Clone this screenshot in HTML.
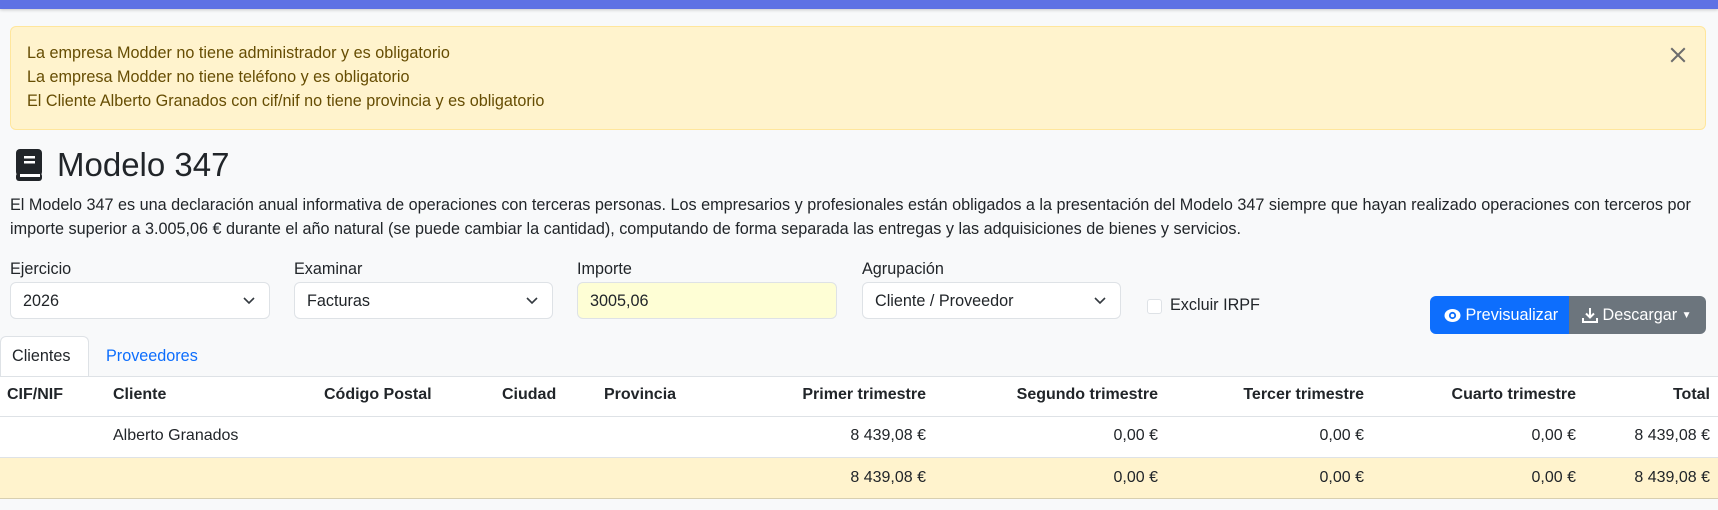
<!DOCTYPE html>
<html><head><meta charset="utf-8"><style>
*{box-sizing:border-box;margin:0;padding:0}
body{width:1718px;height:510px;background:#f8f9fa;font-family:"Liberation Sans",sans-serif;color:#212529;position:relative;overflow:hidden;font-size:16px}
.a{position:absolute;white-space:nowrap}
.topbar{position:absolute;left:0;top:0;width:1718px;height:9px;background:#5e72e4;box-shadow:0 1px 3px rgba(0,0,0,.2)}
.alert{position:absolute;left:10px;top:26px;width:1696px;height:104px;background:#fff3cd;border:1px solid #ffe69c;border-radius:6px;color:#664d03;font-size:16.2px}
.alert div{position:absolute;left:16px}
.lbl{font-size:16.2px;color:#212529}
.sel{position:absolute;top:282px;height:37px;background:#fff;border:1px solid #dee2e6;border-radius:6px;font-size:16.2px;padding:8px 12px;line-height:20px}
.sel svg{position:absolute;right:14px;top:14px}
.btn{position:absolute;top:296px;height:38px;color:#fff;font-size:16.2px;line-height:38px}
.th{font-weight:bold;font-size:16px;top:386px}
</style></head><body>
<div class="topbar"></div>
<div class="alert">
<div style="top:17px">La empresa Modder no tiene administrador y es obligatorio</div>
<div style="top:41px">La empresa Modder no tiene teléfono y es obligatorio</div>
<div style="top:65px">El Cliente Alberto Granados con cif/nif no tiene provincia y es obligatorio</div>
<svg style="position:absolute;right:18px;top:19px" width="18" height="18" viewBox="0 0 16 16"><path d="M2 2L14 14M14 2L2 14" stroke="#6c6c6c" stroke-width="1.8"/></svg>
</div>
<svg class="a" style="left:15px;top:149px" width="28" height="32" viewBox="0 0 28 32"><rect x="1" y="0" width="26" height="27" rx="4" fill="#212529"/><rect x="1" y="24" width="26" height="8" rx="3" fill="#212529"/><rect x="5" y="25" width="20" height="3" fill="#fff"/><rect x="9" y="7" width="11" height="2.5" fill="#fff"/><rect x="9" y="12" width="11" height="2.5" fill="#fff"/></svg>
<div class="a" style="left:57px;top:145px;font-size:33px;line-height:40px">Modelo 347</div>
<div class="a" style="left:10px;top:193px;font-size:16.2px;line-height:24px">El Modelo 347 es una declaración anual informativa de operaciones con terceras personas. Los empresarios y profesionales están obligados a la presentación del Modelo 347 siempre que hayan realizado operaciones con terceros por<br>importe superior a 3.005,06 € durante el año natural (se puede cambiar la cantidad), computando de forma separada las entregas y las adquisiciones de bienes y servicios.</div>
<div class="a lbl" style="left:10px;top:260px">Ejercicio</div>
<div class="a lbl" style="left:294px;top:260px">Examinar</div>
<div class="a lbl" style="left:577px;top:260px">Importe</div>
<div class="a lbl" style="left:862px;top:260px">Agrupación</div>
<div class="sel" style="left:10px;width:260px">2026<svg width="12" height="8" viewBox="0 0 12 8"><path d="M1 1l5 5 5-5" fill="none" stroke="#343a40" stroke-width="1.6"/></svg></div>
<div class="sel" style="left:294px;width:259px">Facturas<svg width="12" height="8" viewBox="0 0 12 8"><path d="M1 1l5 5 5-5" fill="none" stroke="#343a40" stroke-width="1.6"/></svg></div>
<div class="sel" style="left:577px;width:260px;background:#fefed5">3005,06</div>
<div class="sel" style="left:862px;width:259px">Cliente / Proveedor<svg width="12" height="8" viewBox="0 0 12 8"><path d="M1 1l5 5 5-5" fill="none" stroke="#343a40" stroke-width="1.6"/></svg></div>
<div class="a" style="left:1147px;top:299px;width:15px;height:15px;border:1px solid #dee2e6;border-radius:3px;background:#fff"></div>
<div class="a" style="left:1170px;top:296px;font-size:16.2px">Excluir IRPF</div>
<div class="btn" style="left:1430px;width:139px;background:#0d6efd;border-radius:6px 0 0 6px;padding-left:14px"><svg style="vertical-align:-3px" width="17" height="15" viewBox="0 0 17 15"><ellipse cx="8.5" cy="7.5" rx="8" ry="6.5" fill="#fff"/><circle cx="8.5" cy="7.5" r="3.6" fill="#0d6efd"/><circle cx="8.5" cy="7.5" r="1.8" fill="#fff"/></svg> Previsualizar</div>
<div class="btn" style="left:1569px;width:137px;background:#6c757d;border-radius:0 6px 6px 0;padding-left:13px"><svg style="vertical-align:-3px" width="16" height="16" viewBox="0 0 16 16"><path d="M8 1v9M4 6.5l4 4 4-4" fill="none" stroke="#fff" stroke-width="2"/><path d="M1 11v4h14v-4" fill="none" stroke="#fff" stroke-width="2"/></svg> Descargar <span style="font-size:10px;vertical-align:2px">▼</span></div>
<div class="a" style="left:0;top:336px;width:89px;height:41px;background:#fff;border:1px solid #dee2e6;border-bottom:none;border-radius:6px 6px 0 0"></div>
<div class="a" style="left:12px;top:347px;font-size:16.2px">Clientes</div>
<div class="a" style="left:106px;top:347px;font-size:16.2px;color:#0d6efd">Proveedores</div>
<div class="a" style="left:0;top:376px;width:1718px;height:82px;background:#fff;border-top:1px solid #dee2e6"></div>
<div class="a" style="left:0;top:416px;width:1718px;height:1px;background:#dee2e6"></div>
<div class="a" style="left:0;top:457px;width:1718px;height:42px;background:#fff3cd;border-top:1px solid #dee2e6;border-bottom:1px solid #d8cfb0"></div>
<div class="a th" style="left:7px">CIF/NIF</div>
<div class="a th" style="left:113px">Cliente</div>
<div class="a th" style="left:324px">Código Postal</div>
<div class="a th" style="left:502px">Ciudad</div>
<div class="a th" style="left:604px">Provincia</div>
<div class="a th" style="right:792px">Primer trimestre</div>
<div class="a th" style="right:560px">Segundo trimestre</div>
<div class="a th" style="right:354px">Tercer trimestre</div>
<div class="a th" style="right:142px">Cuarto trimestre</div>
<div class="a th" style="right:8px">Total</div>
<div class="a" style="left:113px;top:427px">Alberto Granados</div>
<div class="a" style="right:792px;top:427px">8 439,08 €</div>
<div class="a" style="right:560px;top:427px">0,00 €</div>
<div class="a" style="right:354px;top:427px">0,00 €</div>
<div class="a" style="right:142px;top:427px">0,00 €</div>
<div class="a" style="right:8px;top:427px">8 439,08 €</div>
<div class="a" style="right:792px;top:469px">8 439,08 €</div>
<div class="a" style="right:560px;top:469px">0,00 €</div>
<div class="a" style="right:354px;top:469px">0,00 €</div>
<div class="a" style="right:142px;top:469px">0,00 €</div>
<div class="a" style="right:8px;top:469px">8 439,08 €</div>
</body></html>
